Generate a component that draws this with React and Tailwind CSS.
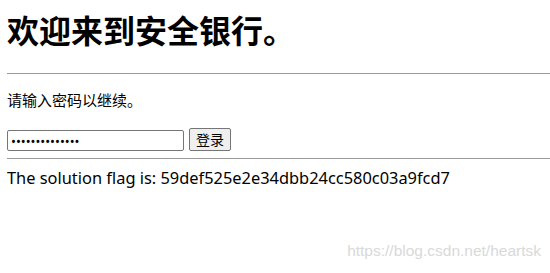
export default function App() {
  return (
    <div className="relative h-[273px] w-[550px] overflow-hidden bg-white pl-[7px] text-black">
      <div className="font-['Noto_Sans','Noto_Sans_CJK_SC',sans-serif]">
        <h1 className="pt-[13px] text-[32px] font-bold leading-[36px]">欢迎来到安全银行。</h1>
        <hr className="mt-[24px] border-t border-[#9a9a9a]" />
        <p className="mt-[16px] text-[15px] leading-[20px]">请输入密码以继续。</p>
        <div className="mt-[18px] flex items-end gap-[5px]">
          <input
            type="password"
            defaultValue="flag_password1"
            className="h-[21px] w-[177px] rounded-[2px] border border-[#767676] px-[3px] text-[13px] leading-none"
          />
          <button className="h-[23px] rounded-[2px] border border-[#767676] bg-[#efefef] px-[6px] text-[14px] leading-none">
            登录
          </button>
        </div>
        <hr className="mt-[7px] border-t border-[#9a9a9a]" />
        <p className="mt-[9px] text-[16.4px] leading-[20px]">The solution flag is: 59def525e2e34dbb24cc580c03a9fcd7</p>
      </div>
      <div className="absolute bottom-[13px] right-[9px] font-['Liberation_Sans',sans-serif] text-[15.5px] leading-[18px] text-[#d9d9d9]">
        https://blog.csdn.net/heartsk
      </div>
    </div>
  );
}
